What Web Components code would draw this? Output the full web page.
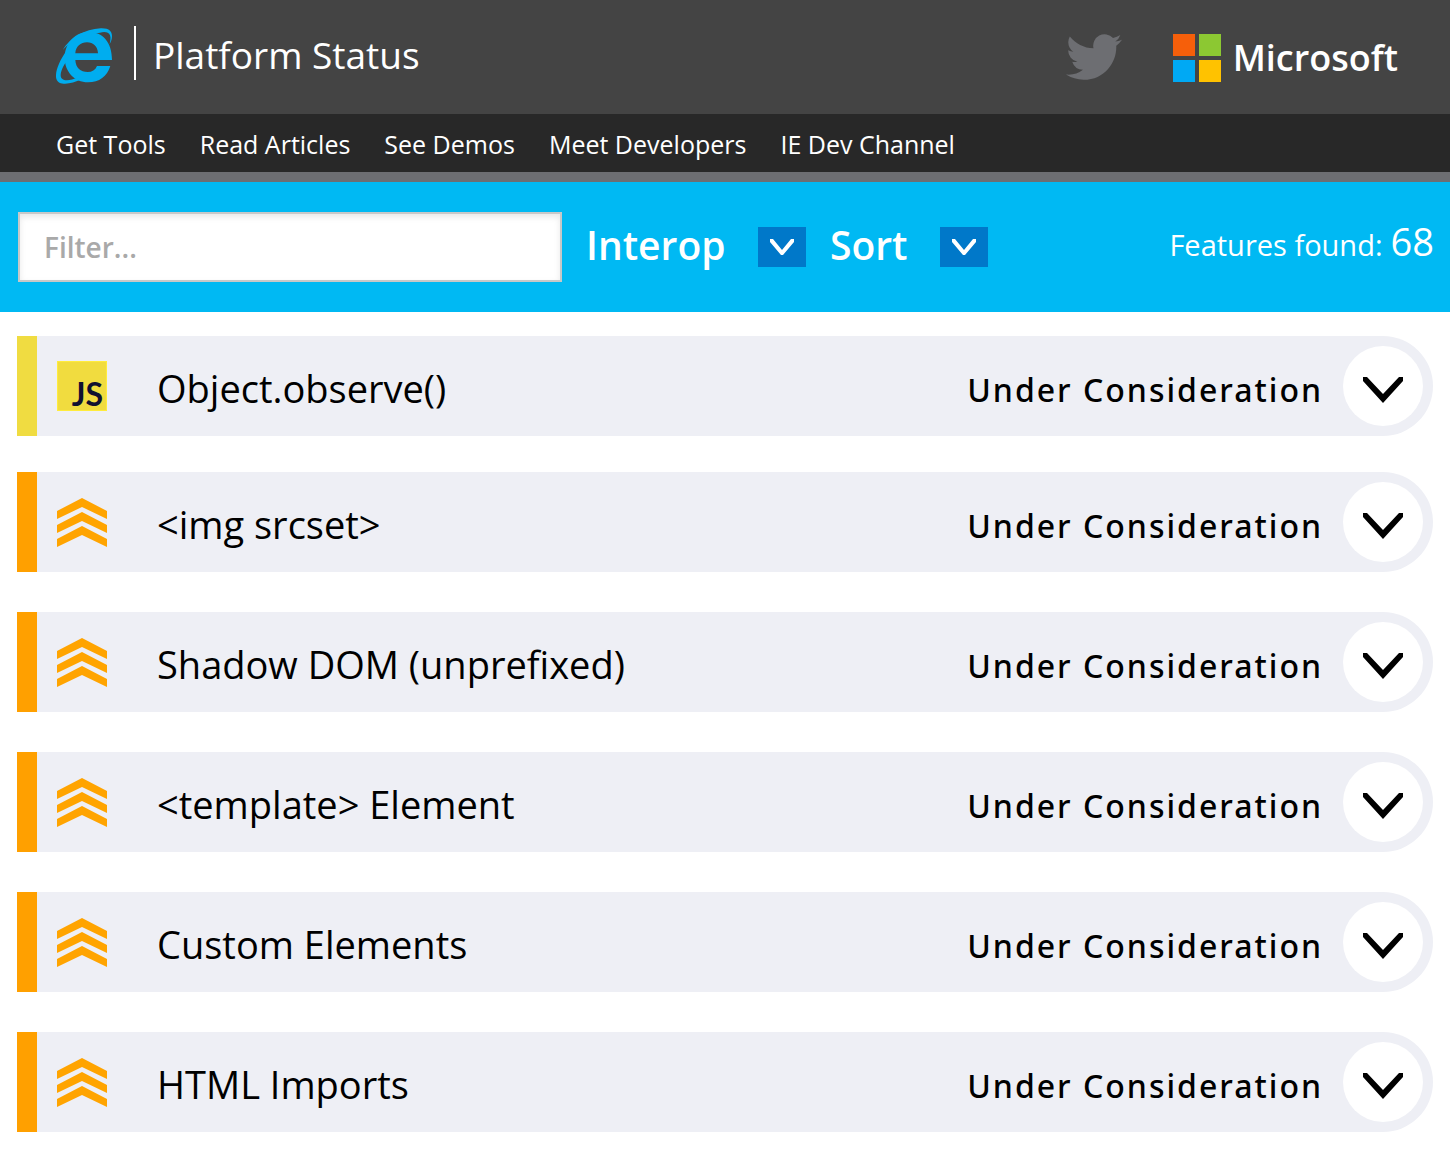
<!DOCTYPE html>
<html lang="en">
<head>
<meta charset="utf-8">
<meta name="viewport" content="width=device-width, initial-scale=1">
<title>Platform Status</title>
<style>
  body { margin: 0; background: #fff; color: #000; font-family: "Segoe UI", "Open Sans", "Noto Sans", sans-serif; }
</style>
</head>
<body>
<status-page></status-page>

<script>
function define(name, html) {
  const template = document.createElement('template');
  template.innerHTML = html;
  customElements.define(name, class extends HTMLElement {
    constructor() {
      super();
      this.attachShadow({ mode: 'open' }).append(template.content.cloneNode(true));
    }
  });
}

define('ie-logo', `
  <style>:host { display: block; width: 56px; height: 56px } svg { display: block }</style>
  <svg width="56" height="56" viewBox="0 0 168 168" fill="#00adef" aria-hidden="true">
    <path fill-rule="evenodd" d="M168 96H58C59 120 74 132 95 132C108 132 118 126 123 114H163C153 145 130 163 96 163C55 163 26 130 26 90C26 42 60 12 98 12C140 12 168 42 168 96ZM58 76H126C125 55 112 43 93 43C74 43 59 56 58 76Z"/>
    <path d="M20 66C42 30 86 3 134 1C160 0 168 11 168 24C168 32 166 40 161 48C163 38 165 30 162 22C158 12 146 10 132 14C90 18 48 34 20 66Z"/>
    <path d="M31 70C8 100 -4 136 1 152C7 174 44 170 76 154L66 148C44 158 24 161 16 150C10 140 18 118 34 96Z"/>
  </svg>`);

define('twitter-link', `
  <style>:host { display: block } a { display: block } svg { display: block }</style>
  <a href="#twitter" aria-label="Twitter"><svg width="56" height="46" viewBox="0 2.2 24 19.6" fill="#6d6e72"><path d="M23.953 4.57a10 10 0 01-2.825.775 4.958 4.958 0 002.163-2.723c-.951.555-2.005.959-3.127 1.184a4.92 4.92 0 00-8.384 4.482C7.69 8.095 4.067 6.13 1.64 3.162a4.822 4.822 0 00-.666 2.475c0 1.71.87 3.213 2.188 4.096a4.904 4.904 0 01-2.228-.616v.06a4.923 4.923 0 003.946 4.827 4.996 4.996 0 01-2.212.085 4.936 4.936 0 004.604 3.417 9.867 9.867 0 01-6.102 2.105c-.39 0-.779-.023-1.17-.067a13.995 13.995 0 007.557 2.209c9.053 0 13.998-7.496 13.998-13.985 0-.21 0-.42-.015-.63A9.935 9.935 0 0024 4.59z"/></svg></a>`);

define('microsoft-logo', `
  <style>
    :host { display: block; padding-top: 2px }
    a { display: flex; align-items: center; gap: 12px; color: #fff; text-decoration: none; font-size: 36px; line-height: 48px; font-weight: 600 }
    svg { display: block }
  </style>
  <a href="#microsoft"><svg width="48" height="48" viewBox="0 0 48 48" aria-hidden="true"><path fill="#f65f0a" d="M0 0h22v22H0z"/><path fill="#8cc832" d="M26 0h22v22H26z"/><path fill="#00a9f4" d="M0 26h22v22H0z"/><path fill="#ffc200" d="M26 26h22v22H26z"/></svg><span>Microsoft</span></a>`);

define('site-header', `
  <style>
    :host { display: flex; align-items: center; justify-content: space-between; height: 114px; padding: 0 52px 0 56px; box-sizing: border-box; background: #444; color: #fff }
    .brand, .links { display: flex; align-items: center }
    .links { gap: 51px }
    .brand { align-items: flex-end; gap: 22px; padding-bottom: 4px }
    h1 { margin: 0 0 4px; padding: 4px 0 0 17px; border-left: 2px solid #fff; font-size: 37px; line-height: 50px; font-weight: 400 }
  </style>
  <div class="brand"><ie-logo></ie-logo><h1><slot></slot></h1></div>
  <div class="links"><twitter-link></twitter-link><microsoft-logo></microsoft-logo></div>`);

define('site-nav', `
  <style>
    :host { display: block; background: #282828; border-bottom: 10px solid #6d6e72 }
    nav { display: flex; gap: 34px; padding: 2px 56px 0 }
    a { color: #fff; text-decoration: none; font-size: 25px; line-height: 56px; white-space: nowrap }
  </style>
  <nav><a href="#tools">Get Tools</a><a href="#articles">Read Articles</a><a href="#demos">See Demos</a><a href="#developers">Meet Developers</a><a href="#channel">IE Dev Channel</a></nav>`);

customElements.define('drop-down', class extends HTMLElement {
  constructor() {
    super();
    const label = this.getAttribute('label');
    this.attachShadow({ mode: 'open' }).innerHTML = `
      <style>
        :host { display: grid; align-items: center; color: #fff }
        select, .box { grid-area: 1 / 1 }
        select { appearance: none; margin: 0; padding: 0 80px 4px 0; border: 0; background: none; color: inherit; font-family: inherit; font-size: 39px; font-weight: 600; line-height: 56px }
        .box { justify-self: end; display: flex; align-items: center; justify-content: center; width: 48px; height: 40px; background: #0078c9; pointer-events: none }
      </style>
      <select aria-label="${label}"><option>${label}</option></select>
      <span class="box"><svg width="24" height="16" viewBox="0 0 24 16" aria-hidden="true"><path fill="#fff" d="M0 0h3L12 11L21 0h3v3L13 16h-2L0 3z"/></svg></span>`;
  }
});

define('filter-bar', `
  <style>
    :host { display: flex; align-items: center; gap: 24px; padding: 30px 16px 30px 18px; background: #00b9f3; color: #fff }
    input { box-sizing: border-box; flex: 0 1 544px; min-width: 0; height: 70px; margin: 0; padding: 0 24px; border: 2px solid #c8c8c8; border-radius: 0; background: #fff; box-shadow: inset 0 3px 6px #e8e8e8; font-family: inherit; font-size: 28px; font-weight: 600; color: #000 }
    input::placeholder { color: #a9a9a9; opacity: 1 }
    .count { margin: 0 0 0 auto; padding-bottom: 8px; display: flex; align-items: baseline; gap: 8px; font-size: 29px; line-height: 56px; white-space: nowrap }
    .count b { font-size: 38px; font-weight: 400 }
  </style>
  <input type="text" aria-label="Filter" placeholder="Filter...">
  <drop-down label="Interop"></drop-down>
  <drop-down label="Sort"></drop-down>
  <p class="count"><span>Features found:</span><b>68</b></p>`);

define('js-icon', `
  <style>
    :host { display: flex; align-items: flex-end; justify-content: flex-end; box-sizing: border-box; width: 50px; height: 50px; padding: 0 3px 0 0; background: #f1dc3f; border: 1px solid #ffec3c; color: #101030; font-family: Lato, sans-serif; font-size: 32px; line-height: 32px; font-weight: 700 }
  </style>JS`);

define('dom-icon', `
  <style>:host { display: block; width: 50px; height: 50px } svg { display: block }</style>
  <svg width="50" height="50" viewBox="0 0 50 50" fill="#ffa400" aria-hidden="true"><path d="M0 14L25 1L50 14V22L25 10L0 22ZM0 28L25 15L50 28V36L25 24L0 36ZM0 42L25 29L50 42V50L25 38L0 50Z"/></svg>`);

define('feature-row', `
  <style>
    :host { display: flex; align-items: center; box-sizing: border-box; height: 100px; padding: 0 10px 0 20px; border-left: 20px solid var(--category, #ffa000); border-radius: 0 50px 50px 0; background: #eeeff5 }
    h2 { flex: 1; min-width: 0; margin: 0 0 0 50px; padding-top: 4px; font-size: 38px; line-height: 56px; font-weight: 400 }
    .status { margin-right: 20px; padding-top: 8px; font-family: "Segoe UI", "Noto Sans", sans-serif; font-size: 32px; line-height: 56px; font-weight: 500; letter-spacing: 2px; white-space: nowrap }
    button { display: flex; align-items: center; justify-content: center; width: 80px; height: 80px; padding: 8px 0 0; border: 0; border-radius: 50%; background: #fff }
  </style>
  <slot name="icon"></slot>
  <h2><slot></slot></h2>
  <span class="status">Under Consideration</span>
  <button type="button" aria-label="Show details"><svg width="40" height="26" viewBox="0 0 40 26" aria-hidden="true"><path d="M0 0H4L20 17L36 0H40V4L20 26L0 4Z"/></svg></button>`);

define('status-page', `
  <style>
    :host { display: block }
    main { display: flex; flex-direction: column; gap: 40px; padding: 24px 17px 22px }
    .script { --category: #f0dc41; margin-bottom: -4px }
  </style>
  <site-header>Platform Status</site-header>
  <site-nav></site-nav>
  <filter-bar></filter-bar>
  <main>
    <feature-row class="script"><js-icon slot="icon"></js-icon>Object.observe()</feature-row>
    <feature-row><dom-icon slot="icon"></dom-icon>&lt;img srcset&gt;</feature-row>
    <feature-row><dom-icon slot="icon"></dom-icon>Shadow DOM (unprefixed)</feature-row>
    <feature-row><dom-icon slot="icon"></dom-icon>&lt;template&gt; Element</feature-row>
    <feature-row><dom-icon slot="icon"></dom-icon>Custom Elements</feature-row>
    <feature-row><dom-icon slot="icon"></dom-icon>HTML Imports</feature-row>
  </main>`);
</script>
</body>
</html>
